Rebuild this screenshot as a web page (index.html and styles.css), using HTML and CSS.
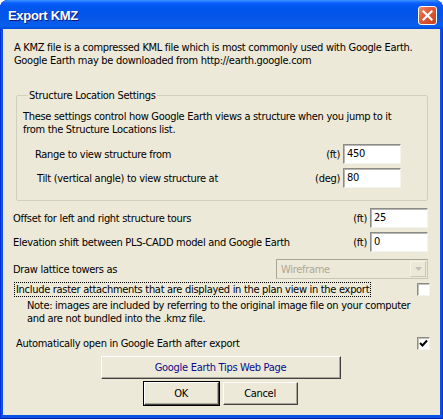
FILE: index.html
```html
<!DOCTYPE html>
<html lang="en">
<head>
    <meta charset="UTF-8">
    <title>Export KMZ</title>
    <link rel="stylesheet" href="styles.css">
</head>
<body>
    <div class="window">
        <div class="titlebar">
            <span class="title">Export KMZ</span>
            <span class="close">
                <svg width="11" height="11" viewBox="0 0 11 11"><path d="M1.5 1.5 L9.5 9.5 M9.5 1.5 L1.5 9.5" stroke="#fff" stroke-width="2.2" stroke-linecap="square"/></svg>
            </span>
        </div>

        <div class="client">
            <p class="intro">A KMZ file is a compressed KML file which is most commonly used with Google Earth.<br>Google Earth may be downloaded from http://earth.google.com</p>

            <!-- Structure location group -->
            <fieldset class="group">
                <legend>Structure Location Settings</legend>
                <p class="group-text">These settings control how Google Earth views a structure when you jump to it<br>from the Structure Locations list.</p>
                <div class="row range">
                    <span class="label">Range to view structure from</span>
                    <span class="unit">(ft)</span>
                    <span class="edit">450</span>
                </div>
                <div class="row tilt">
                    <span class="label">Tilt (vertical angle) to view structure at</span>
                    <span class="unit">(deg)</span>
                    <span class="edit">80</span>
                </div>
            </fieldset>

            <div class="row first">
                <span class="label">Offset for left and right structure tours</span>
                <span class="unit">(ft)</span>
                <span class="edit">25</span>
            </div>
            <div class="row">
                <span class="label">Elevation shift between PLS-CADD model and Google Earth</span>
                <span class="unit">(ft)</span>
                <span class="edit">0</span>
            </div>
            <div class="row combo-row">
                <span class="label">Draw lattice towers as</span>
                <div class="combo">
                    <span class="combo-text">Wireframe</span>
                    <span class="drop">
                        <svg width="7" height="4" viewBox="0 0 7 4"><path d="M0 0 H7 L3.5 4 Z" fill="#c2c0b8"/></svg>
                    </span>
                </div>
            </div>

            <div class="check-row raster">
                <span class="focus">Include raster attachments that are displayed in the plan view in the export</span>
                <span class="checkbox"></span>
            </div>
            <p class="note">Note: images are included by referring to the original image file on your computer<br>and are not bundled into the .kmz file.</p>

            <div class="check-row auto">
                <span class="label">Automatically open in Google Earth after export</span>
                <span class="checkbox">
                    <svg width="9" height="9" viewBox="0 0 9 9"><path d="M1 4 L3.5 6.5 L8 1.5" stroke="#000" stroke-width="2" fill="none"/></svg>
                </span>
            </div>

            <div class="tips">
                <button class="btn wide">Google Earth Tips Web Page</button>
            </div>
            <div class="actions">
                <button class="btn default">OK</button>
                <button class="btn">Cancel</button>
            </div>
        </div>
    </div>
</body>
</html>
```

FILE: styles.css
```css
* {
    margin: 0;
    padding: 0;
    box-sizing: border-box;
}
body {
    background: #ffffff;
    font-family: 'DejaVu Sans Condensed', 'Liberation Sans', sans-serif;
    font-size: 11px;
    line-height: 13px;
    letter-spacing: -0.3px;
    color: #000;
    white-space: nowrap;
}
.window {
    width: 443px;
    height: 419px;
    background: #0a52e6;
    border-radius: 8px 8px 0 0;
    box-shadow: inset 1px 0 #0831d9, inset -1px 0 #0831d9, inset 0 -1px #001ea0;
    display: flex;
    flex-direction: column;
    overflow: hidden;
}
.titlebar {
    height: 29px;
    flex: none;
    border-radius: 8px 8px 0 0;
    background: linear-gradient(to bottom, #3d95ff 0, #0a5fff 3px, #0058ee 6px, #0054e8 14px, #0a5ae9 22px, #0560f0 26px, #0349d6 29px);
    display: flex;
    align-items: center;
    padding: 0 6px 0 8px;
}
.title {
    flex: 1;
    color: #fff;
    font-family: 'Liberation Sans', sans-serif;
    font-weight: bold;
    font-size: 13px;
    letter-spacing: -0.3px;
    text-shadow: 1px 1px #0a1883;
    padding-top: 1px;
}
.close {
    width: 19px;
    height: 19px;
    margin-top: 1px;
    border: 1px solid #fff;
    border-radius: 3px;
    background: linear-gradient(135deg, #f08a6a 0, #e25a36 40%, #c8401f 100%);
    display: flex;
    align-items: center;
    justify-content: center;
}
.client {
    flex: 1;
    margin: 0 3px 4px 3px;
    background: #ece9d8;
    padding: 12px 12px 0 10px;
    overflow: hidden;
}
.intro {
    padding-left: 1px;
}
.group {
    min-width: 0;
    margin: 22px 0 0 3px;
    border: 1px solid #d0d0bf;
    border-radius: 2px;
    padding: 8px 26px 12px 6px;
}
.group legend {
    margin-left: 5px;
    padding: 0 1px;
}
.group-text {
    margin-bottom: 8px;
}
.row {
    display: flex;
    align-items: center;
    height: 20px;
}
.row + .row {
    margin-top: 4px;
}
.row .label {
    flex: 1;
}
.range {
    padding-left: 12px;
}
.tilt {
    padding-left: 14px;
}
.unit {
    margin-right: 3px;
}
.edit {
    width: 58px;
    height: 20px;
    background: #fff;
    border-top: 1px solid #8a8a8a;
    border-left: 1px solid #8a8a8a;
    border-right: 1px solid #f4f3ee;
    border-bottom: 1px solid #f4f3ee;
    box-shadow: inset 1px 1px #b8b6ad;
    padding: 2px 0 0 3px;
}
.row.first {
    margin-top: 7px;
}
.row.combo-row {
    margin-top: 7px;
}
.combo {
    width: 152px;
    height: 20px;
    border: 1px solid #c9c7ba;
    border-top-color: #a8a699;
    border-left-color: #a8a699;
    background: #ece9d8;
    display: flex;
    align-items: center;
    padding: 1px;
}
.combo-text {
    flex: 1;
    color: #aca899;
    padding-left: 3px;
}
.drop {
    width: 16px;
    height: 16px;
    border: 1px solid #f5f4ea;
    border-right-color: #c9c7ba;
    border-bottom-color: #c9c7ba;
    display: flex;
    align-items: center;
    justify-content: center;
}
.check-row {
    display: flex;
    align-items: center;
    justify-content: space-between;
}
.raster {
    margin-top: 3px;
    padding-left: 1px;
    height: 15px;
}
.focus {
    border: 1px dotted #000;
    padding: 0 1px;
}
.checkbox {
    width: 13px;
    height: 13px;
    margin-right: -2px;
    background: #fff;
    border-top: 1px solid #8a8a8a;
    border-left: 1px solid #8a8a8a;
    border-right: 1px solid #f4f3ee;
    border-bottom: 1px solid #f4f3ee;
    box-shadow: inset 1px 1px #c4c2b8;
    display: flex;
    align-items: center;
    justify-content: center;
}
.note {
    margin-top: 2px;
    padding-left: 14px;
}
.auto {
    margin-top: 12px;
    padding-left: 3px;
}
.tips {
    display: flex;
    justify-content: center;
    margin-top: 6px;
}
.actions {
    display: flex;
    justify-content: center;
    gap: 4px;
    margin-top: 3px;
}
.btn {
    font-family: 'DejaVu Sans Condensed', 'Liberation Sans', sans-serif;
    font-size: 11px;
    letter-spacing: -0.3px;
    height: 23px;
    width: 75px;
    background: #ece9d8;
    color: #000;
    border: 1px solid;
    border-color: #fff #404040 #404040 #fff;
    box-shadow: inset -1px -1px #aca899;
    cursor: pointer;
}
.btn.wide {
    width: 240px;
    color: #0a0a8c;
}
.btn.default {
    outline: 1px solid #000;
    outline-offset: 0;
}
```
